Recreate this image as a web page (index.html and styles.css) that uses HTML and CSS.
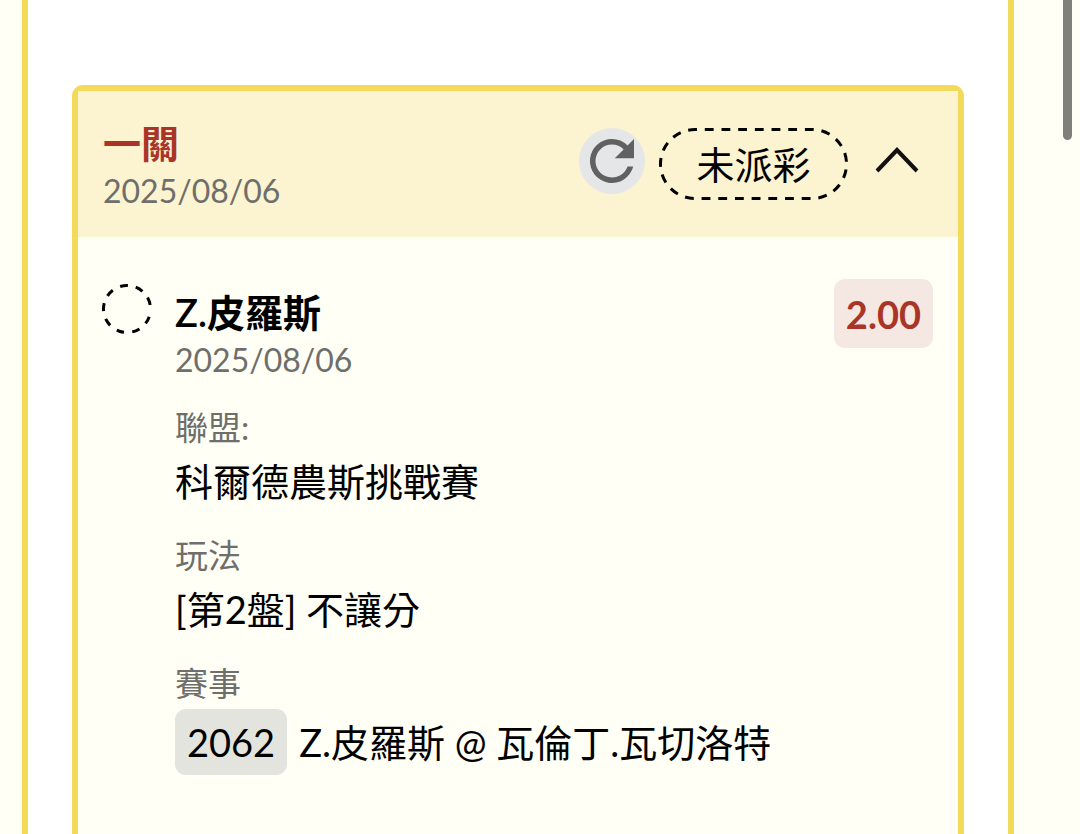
FILE: index.html
```html
<!DOCTYPE html>
<html lang="zh-Hant">

<head>
    <meta charset="UTF-8">
    <meta name="viewport" content="width=device-width, initial-scale=1.0">
    <title>投注紀錄</title>
    <link rel="stylesheet" href="styles.css">
</head>

<body>
    <main class="panel">
        <article class="ticket">
            <header class="ticket-header">
                <div class="ticket-info">
                    <h2 class="ticket-title">一關</h2>
                    <time class="date" datetime="2025-08-06">2025/08/06</time>
                </div>
                <div class="ticket-actions">
                    <button class="refresh-button" type="button" aria-label="重新整理">
                        <svg viewBox="0 0 24 24" aria-hidden="true">
                            <path d="M17.65 6.35A7.96 7.96 0 0 0 12 4a8 8 0 1 0 7.73 10h-2.08A6 6 0 1 1 12 6c1.66 0 3.14.69 4.22 1.78L13 11h7V4l-2.35 2.35z" />
                        </svg>
                    </button>
                    <span class="status">
                        <svg class="status-outline" viewBox="0 0 189 72" aria-hidden="true">
                            <rect x="1.5" y="1.5" width="186" height="69" rx="34.5" pathLength="459" />
                        </svg>
                        未派彩
                    </span>
                    <button class="toggle-button" type="button" aria-label="收合" aria-expanded="true">
                        <svg viewBox="0 0 70 66" aria-hidden="true">
                            <path d="M15 43 35 22l20 21" />
                        </svg>
                    </button>
                </div>
            </header>

            <section class="bet">
                <svg class="bet-state" viewBox="0 0 50 50" aria-hidden="true">
                    <circle cx="25" cy="25" r="23.5" pathLength="360" transform="rotate(19 25 25)" />
                </svg>
                <div class="bet-content">
                    <div class="bet-top">
                        <div class="bet-heading">
                            <h3 class="bet-name">Z.皮羅斯</h3>
                            <time class="date" datetime="2025-08-06">2025/08/06</time>
                        </div>
                        <span class="odds">2.00</span>
                    </div>
                    <dl class="details">
                        <div class="detail">
                            <dt>聯盟:</dt>
                            <dd>科爾德農斯挑戰賽</dd>
                        </div>
                        <div class="detail">
                            <dt>玩法</dt>
                            <dd>[第2盤] 不讓分</dd>
                        </div>
                        <div class="detail">
                            <dt>賽事</dt>
                            <dd class="match">
                                <span class="match-id">2062</span>
                                <span>Z.皮羅斯 @ 瓦倫丁.瓦切洛特</span>
                            </dd>
                        </div>
                    </dl>
                </div>
            </section>
        </article>
    </main>
    <div class="scroll-thumb"></div>
</body>

</html>
```
FILE: styles.css
```css
:root {
    --page-bg: #fffff6;
    --border-color: #f4da5b;
    --header-bg: #fcf3d0;
    --muted: #6e6e6a;
    --red: #a93529;
}

* {
    margin: 0;
    padding: 0;
    box-sizing: border-box;
}

html {
    scrollbar-width: none;
}

body {
    font-family: Lato, "Noto Sans CJK TC", sans-serif;
    font-size: 38px;
    line-height: 48px;
    color: #000;
    background-color: var(--page-bg);
}

button {
    border: none;
    background: none;
    cursor: pointer;
}

svg {
    display: block;
}

.panel {
    min-height: 100vh;
    margin: 0 66px 0 22px;
    padding: 85px 44px 0;
    background-color: #fff;
    border: solid var(--border-color);
    border-width: 0 6px;
}

.ticket {
    border: 6px solid var(--border-color);
    border-radius: 11px;
    background-color: var(--page-bg);
}

.ticket-header {
    display: flex;
    justify-content: space-between;
    align-items: center;
    padding: 22px 26px 22px 25px;
    background-color: var(--header-bg);
}

.ticket-info {
    padding-top: 6px;
}

.ticket-title {
    font-size: 38px;
    font-weight: 700;
    color: var(--red);
}

.date {
    display: block;
    font-size: 32px;
    color: var(--muted);
}

.ticket-actions {
    display: flex;
    align-items: flex-start;
    gap: 14px;
}

.refresh-button {
    width: 66px;
    height: 66px;
    border-radius: 50%;
    background-color: #e5e6e8;
}

.refresh-button svg {
    fill: #616161;
}

.status {
    position: relative;
    width: 189px;
    padding: 12px 0;
    text-align: center;
}

.status-outline {
    position: absolute;
    top: 0;
    left: 0;
    width: 100%;
    height: 100%;
    fill: none;
    stroke: #000;
    stroke-width: 3;
    stroke-dasharray: 9 8;
    stroke-dashoffset: 7;
}

.toggle-button {
    width: 70px;
    height: 66px;
}

.toggle-button svg {
    fill: none;
    stroke: #111;
    stroke-width: 4;
}

.bet {
    display: flex;
    align-items: flex-start;
    gap: 23px;
    padding: 42px 25px 80px 24px;
}

.bet-state {
    flex: none;
    width: 50px;
    height: 50px;
    margin-top: 5px;
    fill: none;
    stroke: #000;
    stroke-width: 3;
    stroke-dasharray: 19 20 19 20 19 20 19 20 19 20 19 20 19 20 19 20 19 29;
}

.bet-content {
    flex: 1;
}

.bet-top {
    display: flex;
    justify-content: space-between;
    align-items: flex-start;
}

.bet-heading {
    padding-top: 9px;
}

.bet-name {
    font-size: 38px;
    font-weight: 600;
}

.odds {
    padding: 11px 12px 10px;
    border-radius: 11px;
    font-weight: 700;
    color: var(--red);
    background-color: #f5e8e2;
}

.details {
    display: grid;
    gap: 20px;
    margin-top: 19px;
}

.detail dt {
    font-size: 33px;
    color: var(--muted);
}

.detail dd {
    line-height: 60px;
}

.detail .match {
    display: flex;
    align-items: center;
    gap: 12px;
    padding-top: 2px;
}

.match-id {
    padding: 3px 12px;
    border-radius: 11px;
    background-color: #e4e4de;
}

.scroll-thumb {
    position: fixed;
    top: -20px;
    right: 8px;
    width: 9px;
    height: 160px;
    border-radius: 5px;
    background-color: #80807b;
}
```
